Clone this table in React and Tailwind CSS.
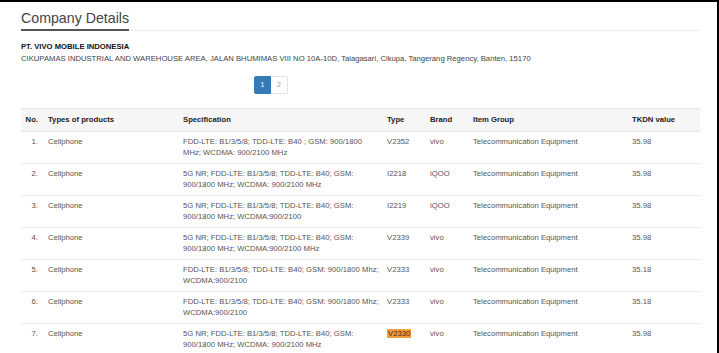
import React from 'react'

const products = [
    {
        spec: ['FDD-LTE: B1/3/5/8; TDD-LTE: B40 ; GSM: 900/1800', 'MHz; WCDMA: 900/2100 MHz'],
        type: 'V2352',
        brand: 'vivo',
        tkdn: '35.98',
    },
    {
        spec: ['5G NR; FDD-LTE: B1/3/5/8; TDD-LTE: B40; GSM:', '900/1800 MHz; WCDMA: 900/2100 MHz'],
        type: 'I2218',
        brand: 'iQOO',
        tkdn: '35.98',
    },
    {
        spec: ['5G NR; FDD-LTE: B1/3/5/8; TDD-LTE: B40; GSM:', '900/1800 MHz; WCDMA:900/2100'],
        type: 'I2219',
        brand: 'iQOO',
        tkdn: '35.98',
    },
    {
        spec: ['5G NR; FDD-LTE: B1/3/5/8; TDD-LTE: B40; GSM:', '900/1800 MHz; WCDMA:900/2100 MHz'],
        type: 'V2339',
        brand: 'vivo',
        tkdn: '35.98',
    },
    {
        spec: ['FDD-LTE: B1/3/5/8; TDD-LTE: B40; GSM: 900/1800 Mhz;', 'WCDMA:900/2100'],
        type: 'V2333',
        brand: 'vivo',
        tkdn: '35.18',
    },
    {
        spec: ['FDD-LTE: B1/3/5/8; TDD-LTE: B40; GSM: 900/1800 Mhz;', 'WCDMA:900/2100'],
        type: 'V2333',
        brand: 'vivo',
        tkdn: '35.18',
    },
    {
        spec: ['5G NR; FDD-LTE: B1/3/5/8; TDD-LTE: B40; GSM:', '900/1800 MHz; WCDMA: 900/2100 MHz'],
        type: 'V2330',
        brand: 'vivo',
        tkdn: '35.98',
        highlight: true,
    },
]

const App = () => {
    return (
        <div className="h-[353px] overflow-hidden border-t-2 border-r-2 border-black bg-white font-['Liberation_Sans',Arial,sans-serif]">
            <div className="pl-[21px] pr-[17px]">
                {/* heading with underline */}
                <div className="mt-[4px] border-b border-[#ececec]">
                    <h2 className="-mb-px inline-block border-b-2 border-[#555] pb-[1px] text-[14.2px] leading-[20px] text-[#444]">
                        Company Details
                    </h2>
                </div>

                <div className="mt-[10px] text-[7.68px] leading-[12px]">
                    <p className="font-bold text-[#111]">PT. VIVO MOBILE INDONESIA</p>
                    <p className="text-[#444]">
                        CIKUPAMAS INDUSTRIAL AND WAREHOUSE AREA, JALAN BHUMIMAS VIII NO 10A-10D, Talagasari, Cikupa, Tangerang Regency, Banten, 15170
                    </p>
                </div>

                {/* pagination */}
                <div className="ml-[233px] mt-[11px] flex text-[7px]">
                    <span className="flex h-[18px] w-[17px] items-center justify-center rounded-l-[2px] border border-[#337ab7] bg-[#337ab7] text-white">
                        1
                    </span>
                    <span className="flex h-[18px] w-[17px] items-center justify-center rounded-r-[2px] border border-l-0 border-[#e3e3e3] text-[#999]">
                        2
                    </span>
                </div>

                <table className="mt-[14px] w-[679px] table-fixed border-collapse text-[7.7px] leading-[11.5px]">
                    <colgroup>
                        <col className="w-[23px]" />
                        <col className="w-[135px]" />
                        <col className="w-[204px]" />
                        <col className="w-[43px]" />
                        <col className="w-[43px]" />
                        <col className="w-[159px]" />
                        <col className="w-[72px]" />
                    </colgroup>
                    <thead>
                        <tr className="border-t border-b border-[#e6e6e6] bg-[#f6f6f6] text-left font-bold text-[#222]">
                            <th className="py-[5px] pr-[6px] text-right">No.</th>
                            <th className="py-[5px] pl-[4px]">Types of products</th>
                            <th className="py-[5px] pl-[4px]">Specification</th>
                            <th className="py-[5px] pl-[4px]">Type</th>
                            <th className="py-[5px] pl-[4px]">Brand</th>
                            <th className="py-[5px] pl-[4px]">Item Group</th>
                            <th className="py-[5px] pl-[4px]">TKDN value</th>
                        </tr>
                    </thead>
                    <tbody className="text-[#555]">
                        {products.map((p, i) => (
                            <tr key={i} className="border-b border-[#ececec] align-top">
                                <td className="py-[4px] pr-[6px] text-right">{i + 1}.</td>
                                <td className="py-[4px] pl-[4px]">Cellphone</td>
                                <td className="whitespace-nowrap py-[4px] pl-[4px]">
                                    {p.spec[0]}
                                    <br />
                                    {p.spec[1]}
                                </td>
                                <td className="py-[4px] pl-[4px]">
                                    {p.highlight ? (
                                        <span className="bg-[#f39c3c] px-[1px] text-[#3a2a10]">{p.type}</span>
                                    ) : (
                                        p.type
                                    )}
                                </td>
                                <td className="py-[4px] pl-[4px]">{p.brand}</td>
                                <td className="py-[4px] pl-[4px]">Telecommunication Equipment</td>
                                <td className="py-[4px] pl-[4px]">{p.tkdn}</td>
                            </tr>
                        ))}
                    </tbody>
                </table>
            </div>
        </div>
    )
}

export default App
